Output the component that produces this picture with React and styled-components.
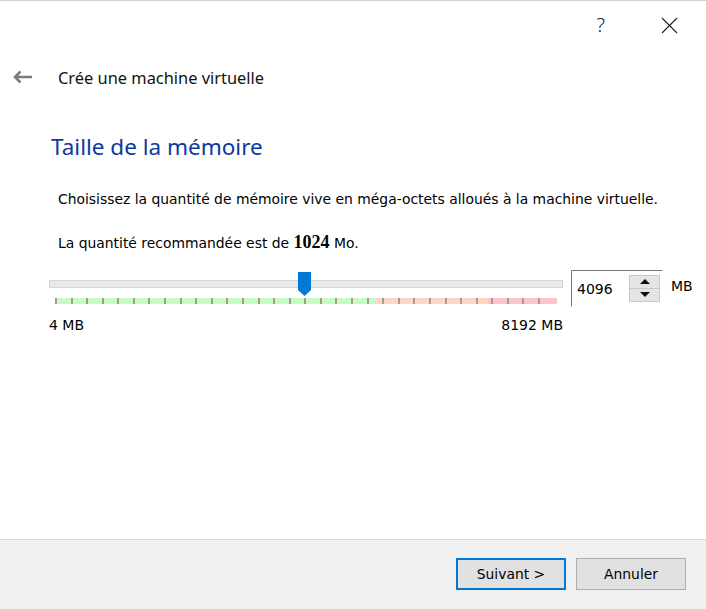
import React from 'react'
import styled, { createGlobalStyle } from 'styled-components'

const GlobalStyle = createGlobalStyle`
  html, body {
    margin: 0;
    padding: 0;
    background: #fff;
  }
  * { box-sizing: border-box; }
`

const MIN = 4
const MAX = 8192
const VALUE = 4096
const TICKS = 32
const TICK_STEP = 15.58

const Window = styled.div`
  width: 706px;
  height: 609px;
  display: flex;
  flex-direction: column;
  border-top: 1px solid #d3d3d3;
  background: #fff;
  font-family: "DejaVu Sans", Verdana, sans-serif;
  color: #000;
  overflow: hidden;
`
const TitleBar = styled.div`
  height: 48px;
  display: flex;
  justify-content: flex-end;
  align-items: center;
  padding-right: 28px;
  gap: 56px;
`
const HelpButton = styled.span`
  font-family: "Noto Sans", sans-serif;
  font-weight: 300;
  font-size: 20px;
  color: #222;
  line-height: 1;
`
const CloseIcon = styled.svg`
  display: block;
`
const HeaderRow = styled.div`
  height: 56px;
  display: flex;
  align-items: center;
  padding-left: 12px;
`
const BackIcon = styled.svg`
  display: block;
  margin-right: 25px;
`
const HeaderText = styled.span`
  font-family: "Noto Sans", sans-serif;
  font-size: 16.4px;
  color: #111;
`
const Content = styled.div`
  padding-left: 51px;
  display: flex;
  flex-direction: column;
`
const PageTitle = styled.h1`
  margin: 27px 0 0;
  font-family: "Noto Sans", sans-serif;
  font-weight: 400;
  font-size: 22.5px;
  line-height: 30px;
  color: #0a3aa0;
`
const Paragraph = styled.p`
  margin: ${p => p.$top}px 0 0 7px;
  font-size: 13.9px;
  line-height: 18px;
`
const Strong = styled.b`
  font-family: "Liberation Serif", "Times New Roman", serif;
  font-size: 18px;
`
const SliderRow = styled.div`
  display: flex;
  align-items: flex-start;
  margin: 18px 0 0 -2px;
`
const SliderColumn = styled.div`
  width: 514px;
  padding-top: 10px;
  display: flex;
  flex-direction: column;
`
const Groove = styled.div`
  position: relative;
  height: 8px;
  background: #e7eaea;
  border: 1px solid #d6d6d6;
`
const Handle = styled.div`
  position: absolute;
  top: -9px;
  width: 13px;
  height: 24px;
  background: #0078d7;
  clip-path: polygon(0 0, 100% 0, 100% 75%, 50% 100%, 0 75%);
`
const TickStrip = styled.div`
  position: relative;
  margin: 10px 0 0 7px;
  width: 501px;
  height: 6px;
  background: linear-gradient(
    to right,
    #c4fcc4 0,
    #c4fcc4 319px,
    #ffd6c4 319px,
    #ffd6c4 432px,
    #ffc4c6 432px,
    #ffc4c6 100%
  );
`
const Tick = styled.span`
  position: absolute;
  top: 0;
  width: 2px;
  height: 6px;
  background: #a39c90;
`
const RangeLabels = styled.div`
  display: flex;
  justify-content: space-between;
  margin-top: 13px;
  font-size: 14px;
  line-height: 17px;
`
const SpinBox = styled.div`
  margin-left: 8px;
  width: 92px;
  height: 37px;
  display: flex;
  align-items: center;
  justify-content: space-between;
  border: 1px solid;
  border-color: #7a7a7a #fff #fff #7a7a7a;
  padding: 2px 2px 3px 5px;
`
const SpinValue = styled.span`
  font-size: 14px;
  padding-top: 2px;
`
const SpinButtons = styled.div`
  display: flex;
  flex-direction: column;
  width: 31px;
  height: 27px;
`
const SpinButton = styled.div`
  flex: 1;
  display: flex;
  align-items: center;
  justify-content: center;
  background: #e5e5e5;
  border: 1px solid #c8c8c8;
  & + & { border-top: none; }
`
const Arrow = styled.span`
  width: 0;
  height: 0;
  border-left: 5px solid transparent;
  border-right: 5px solid transparent;
  ${p => p.$up
    ? 'border-bottom: 5px solid #111;'
    : 'border-top: 5px solid #111;'}
`
const Unit = styled.span`
  margin: 8px 0 0 8px;
  font-size: 14px;
`
const Spacer = styled.div`
  flex: 1;
`
const Footer = styled.div`
  height: 70px;
  border-top: 1px solid #d8d8d8;
  background: #f0f0f0;
  display: flex;
  justify-content: flex-end;
  align-items: flex-start;
  gap: 10px;
  padding: 18px 20px 0 0;
`
const Button = styled.button`
  width: 110px;
  height: 32px;
  background: #e1e1e1;
  border: ${p => (p.$primary ? '2px solid #0078d7' : '1px solid #adadad')};
  font-family: "DejaVu Sans", Verdana, sans-serif;
  font-size: 13.9px;
  color: #000;
  padding: 0;
`

export default function App() {
  const handleLeft = 7 + ((VALUE - MIN) / (MAX - MIN)) * 501 - 6.5
  return (
    <>
      <GlobalStyle />
      <Window>
        <TitleBar>
          <HelpButton>?</HelpButton>
          <CloseIcon width="17" height="17" viewBox="0 0 17 17">
            <path d="M1 1 L16 16 M16 1 L1 16" stroke="#222" strokeWidth="1.1" />
          </CloseIcon>
        </TitleBar>
        <HeaderRow>
          <BackIcon width="21" height="14" viewBox="0 0 21 14">
            <path d="M20 7 H3 M8.5 1.5 L3 7 L8.5 12.5" stroke="#7d7d7d" strokeWidth="2.6" fill="none" />
          </BackIcon>
          <HeaderText>Crée une machine virtuelle</HeaderText>
        </HeaderRow>
        <Content>
          <PageTitle>Taille de la mémoire</PageTitle>
          <Paragraph $top={28}>
            Choisissez la quantité de mémoire vive en méga-octets alloués à la machine virtuelle.
          </Paragraph>
          <Paragraph $top={25}>
            La quantité recommandée est de <Strong>1024</Strong> Mo.
          </Paragraph>
          <SliderRow>
            <SliderColumn>
              <Groove>
                <Handle style={{ left: Math.round(handleLeft) - 3 }} />
              </Groove>
              <TickStrip>
                {Array.from({ length: TICKS }, (_, i) => (
                  <Tick key={i} style={{ left: Math.round(i * TICK_STEP) - 1 }} />
                ))}
              </TickStrip>
              <RangeLabels>
                <span>4 MB</span>
                <span>8192 MB</span>
              </RangeLabels>
            </SliderColumn>
            <SpinBox>
              <SpinValue>{VALUE}</SpinValue>
              <SpinButtons>
                <SpinButton><Arrow $up /></SpinButton>
                <SpinButton><Arrow /></SpinButton>
              </SpinButtons>
            </SpinBox>
            <Unit>MB</Unit>
          </SliderRow>
        </Content>
        <Spacer />
        <Footer>
          <Button $primary>Suivant &gt;</Button>
          <Button>Annuler</Button>
        </Footer>
      </Window>
    </>
  )
}
